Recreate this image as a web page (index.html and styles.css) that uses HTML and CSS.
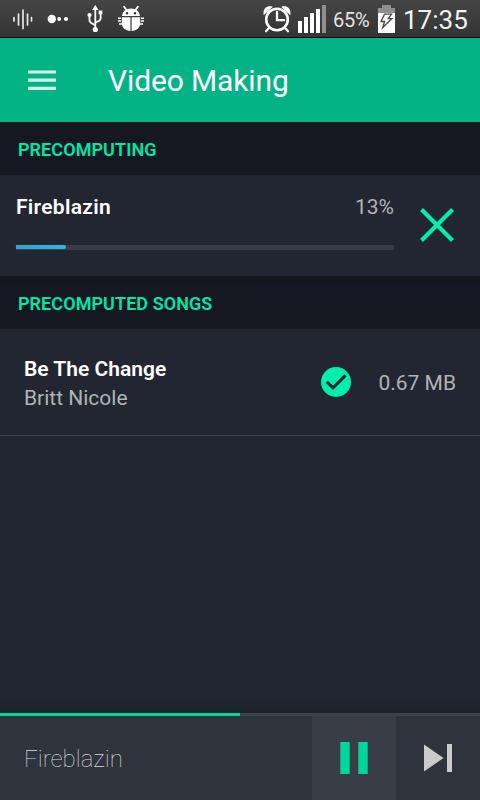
FILE: index.html
```
<!DOCTYPE html>
<html lang="en">
<head>
<meta charset="utf-8">
<title>Video Making</title>
<link rel="stylesheet" href="styles.css">
</head>
<body>
<div class="screen">
  <div class="status">
    <svg class="status-left" width="150" height="37" viewBox="0 0 150 37">
      <g stroke="#e8e8e8" stroke-width="1.7" stroke-linecap="round">
        <path d="M14 17.500v3.500M18.500 14v11M23 10v18.500M27.500 14v11M31.500 17.500v3.500"/>
      </g>
      <g fill="#fff"><circle cx="51.800" cy="19" r="4.200"/><circle cx="59.200" cy="19" r="1.900"/><circle cx="66" cy="19" r="2.100"/></g>
      <g fill="none" stroke="#fff" stroke-width="1.800">
        <path d="M95.300 9v20M89.500 16v4.500q0 1.500 1.500 2.300l4.300 2.700M100.600 13v5.500q0 1.500-1.400 2.200l-3.900 2"/>
      </g>
      <g fill="#fff"><path d="M95.300 5l3.200 5h-6.400zM98.700 10.500h3.700v3.800h-3.700z"/><circle cx="89.500" cy="15" r="2.100"/><circle cx="95.300" cy="29.500" r="2.600"/></g>
      <g fill="#fff">
        <path d="M122 16c.4-4.500 4-7.500 9-7.500s8.600 3 9 7.500zM121.800 17.200h8.600V31c-5-.3-8.600-3.300-8.600-8zM131.600 17.200h8.600V23c0 4.700-3.600 7.700-8.600 8z"/>
      </g>
      <path d="M126.500 10l-2.400-3.300M135.500 10l2.400-3.300" stroke="#fff" stroke-width="1.800" stroke-linecap="round"/>
      <path d="M118 18.300h3M118 21h3M119 24h3M141 18.300h3M141 21h3M140 24h3" stroke="#fff" stroke-width="1.600"/>
      <g fill="#333"><circle cx="127" cy="13.300" r="1.200"/><circle cx="135" cy="13.300" r="1.200"/></g>
    </svg>
    <div class="status-right">
      <svg class="alarm" width="28" height="28" viewBox="0 0 28 28">
        <circle cx="14" cy="14.500" r="10.800" fill="none" stroke="#fff" stroke-width="2.600"/>
        <path d="M.7 10.200C-.5 3.800 4 0 9.800 1.800zM27.300 10.200C28.500 3.800 24 0 18.200 1.800z" fill="#fff"/>
        <path d="M14 7v8.200h7M6 23l-3 3.200M22 23l3 3.200" fill="none" stroke="#fff" stroke-width="2.300" stroke-linecap="round"/>
      </svg>
      <svg class="signal" width="28" height="28" viewBox="0 0 28 28">
        <path d="M0 16h4v12H0zM6 12h4v16H6zM12 8h4v20h-4zM18 4h4v24h-4z" fill="#fff"/>
        <path d="M24 0h4v28h-4z" fill="#909090"/>
      </svg>
      <span class="percent">65%</span>
      <svg class="battery" width="17" height="28" viewBox="0 0 17 28">
        <path d="M4 0h9v3h4v6H0V3h4z" fill="#8e8e8e"/>
        <path d="M0 8h17v20H0z" fill="#fff"/>
        <path d="M6.500 9.200h7l-3.200 4.500h3.500L4.800 22.500l1.700-6H3z" fill="#fff" stroke="#444" stroke-width="1.300"/>
      </svg>
      <span class="clock">17:35</span>
    </div>
  </div>

  <header class="appbar">
    <svg width="28" height="21" viewBox="0 0 28 21"><path d="M0 .4h28v3.200H0zM0 8.600h28v3.200H0zM0 16.700h28v3.200H0z" fill="#d8f3ea"/></svg>
    <h1>Video Making</h1>
  </header>

  <main>
    <h2 class="section">PRECOMPUTING</h2>
    <div class="task">
      <div class="task-info">
        <div class="task-head"><span class="name task-name">Fireblazin</span><span class="meta">13%</span></div>
        <div class="bar"><div class="bar-fill"></div></div>
      </div>
      <svg class="cancel" width="34" height="34" viewBox="0 0 34 34"><path d="M1.500 1.500l31 31M32.500 1.500l-31 31" stroke="#00efab" stroke-width="4.200"/></svg>
    </div>
    <h2 class="section">PRECOMPUTED SONGS</h2>
    <div class="song">
      <div class="song-info"><div class="name">Be The Change</div><div class="meta">Britt Nicole</div></div>
      <svg width="30" height="30" viewBox="0 0 30 30"><circle cx="15" cy="15" r="15" fill="#00efab"/><path d="M5.800 14.700l6.200 6.200L24.500 8.400" fill="none" stroke="#222630" stroke-width="3"/></svg>
      <span class="meta size">0.67 MB</span>
    </div>
  </main>

  <div class="shade"></div>
  <div class="seek"><div class="seek-fill"></div></div>
  <footer class="player">
    <div class="track">Fireblazin</div>
    <div class="button active"><svg width="28" height="32" viewBox="0 0 28 32"><path d="M.3 0h9.400v32H.3zM18.300 0h9.400v32h-9.400z" fill="#00d59b"/></svg></div>
    <div class="button"><svg width="28" height="28" viewBox="0 0 28 28"><path d="M0 .5L19.500 14 0 27.500zM23 0h5v28h-5z" fill="#cbcbcb"/></svg></div>
  </footer>
</div>
</body>
</html>
```
FILE: styles.css
```
* { box-sizing: border-box; }
body { margin: 0; background: #222630; font-family: Roboto, "Liberation Sans", sans-serif; }
svg { display: block; flex: none; }
h1, h2 { margin: 0; }
span, h1, h2, .name, .meta, .track { white-space: nowrap; }
.screen { width: 480px; height: 800px; display: flex; flex-direction: column; overflow: hidden; }

.status { height: 38px; display: flex; justify-content: space-between; background: linear-gradient(#454545, #343434); border-bottom: 1px solid #000; color: #f2f2f2; }
.status-right { display: flex; align-items: flex-start; padding: 5px 12px 0 0; }
.alarm { margin-right: 7px; }
.percent { width: 37px; margin: 0 8px 0 7px; font-size: 20px; letter-spacing: -.2px; line-height: 30px; color: #e4e4e4; }
.clock { width: 65px; margin-left: 8px; font-size: 26px; line-height: 30px; }

.appbar { height: 84px; padding: 0 28px; display: flex; align-items: center; background: #03b385; color: #fff; }
.appbar h1 { margin: 1px 0 0 52px; font-size: 30px; font-weight: 400; letter-spacing: -.13px; line-height: 36px; }

.section { height: 53px; padding: 1px 18px 0; background: linear-gradient(#13161b, #151820 12px); color: #00e7a6; font-size: 18px; font-weight: 600; letter-spacing: .07px; line-height: 53px; }
.task { height: 101px; display: flex; align-items: flex-start; gap: 26px; padding: 18px 26px 0 16px; background: #222630; }
.task-info { width: 378px; }
.task-head { display: flex; justify-content: space-between; line-height: 28px; }
.name { color: #fff; font-size: 21px; font-weight: 600; }
.task-name { letter-spacing: .3px; }
.meta { color: #b1b3b6; font-size: 21px; font-weight: 400; }
.bar { height: 5px; margin-top: 24px; background: #393b46; }
.bar-fill { width: 50px; height: 4px; border-radius: 0 2px 2px 0; background: linear-gradient(90deg, #36a0cb, #33b5e5); box-shadow: 0 0 1px #248db3; }
.cancel { margin-top: 15px; }
.song { height: 107px; display: flex; align-items: center; padding: 0 24px; border-bottom: 1px solid #41444d; }
.song-info { flex: 1; padding-top: 4px; line-height: 29px; }
.size { margin-left: 27px; padding-top: 2px; }

.shade { height: 20px; margin-top: auto; background: linear-gradient(#222630, #1e222b); }
.seek { height: 3px; background: #3e4149; }
.seek-fill { width: 240px; height: 3px; background: #00d59b; }
.player { height: 84px; display: flex; background: #2f333c; }
.track { flex: 1; padding: 1px 0 0 24px; color: #d8d9db; font-size: 24px; font-weight: 100; line-height: 84px; }
.button { width: 84px; display: flex; align-items: center; justify-content: center; }
.active { background: #393d46; }
```
